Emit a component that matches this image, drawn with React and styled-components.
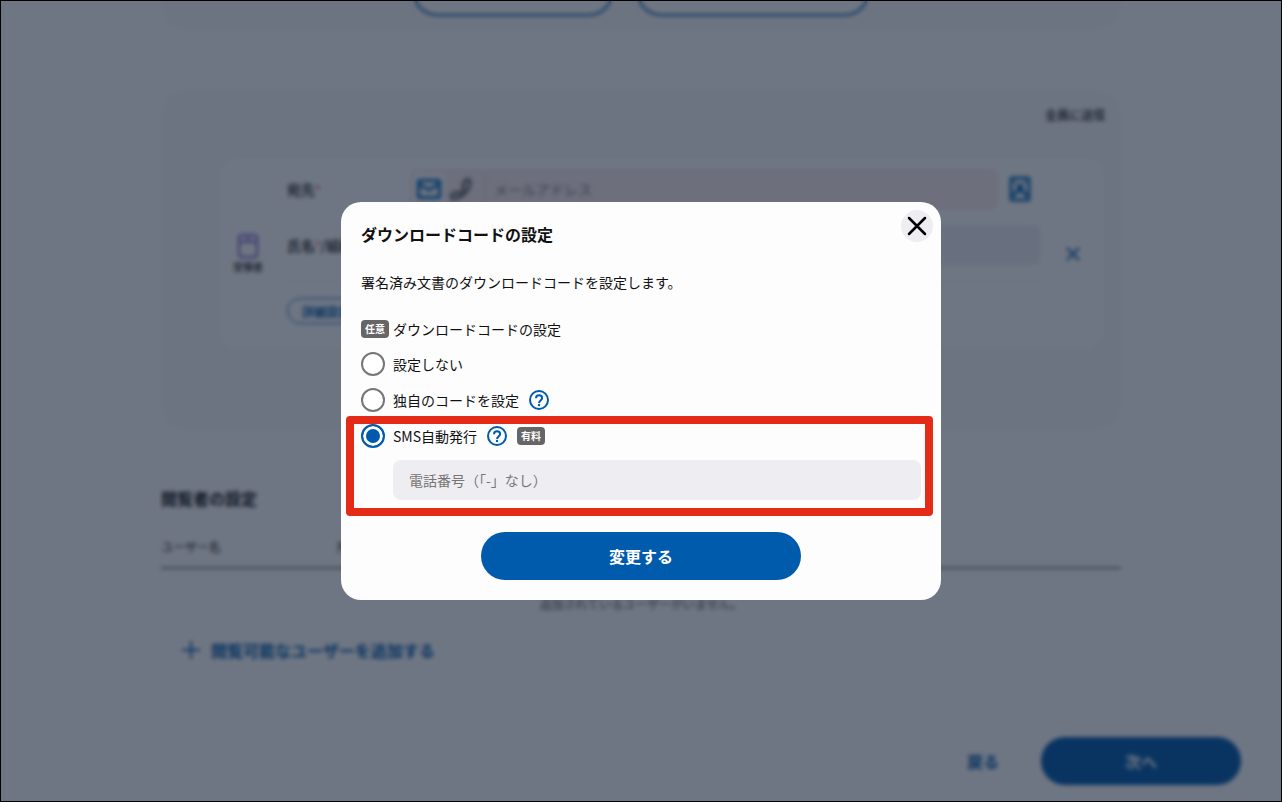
import React, { useState } from "react";
import styled, { createGlobalStyle, css } from "styled-components";

const GlobalStyle = createGlobalStyle`
  *, *::before, *::after {
    box-sizing: border-box;
  }
  body {
    margin: 0;
    background-color: #fff;
    color: #111;
    font-family: "Noto Sans CJK JP", sans-serif;
    font-size: 14px;
    line-height: 20px;
  }
  button, input {
    font-family: inherit;
  }
  button {
    cursor: pointer;
  }
`;

const blue = "#005bac";

const Page = styled.div`
  height: 100vh;
  overflow: hidden;
  display: flex;
  flex-direction: column;
`;

const Content = styled.main`
  flex: 1;
  min-height: 0;
  width: 100%;
  max-width: 960px;
  margin: 0 auto;
`;

const AddPanel = styled.section`
  display: flex;
  justify-content: center;
  align-items: flex-end;
  gap: 24px;
  height: 30px;
  padding-bottom: 14px;
  background-color: #f9f9fb;
  border-radius: 0 0 24px 24px;
`;

const OutlineButton = styled.button`
  flex: none;
  width: ${({ $wide }) => ($wide ? "232px" : "200px")};
  height: 48px;
  border: 2px solid ${blue};
  border-radius: 24px;
  background-color: #fff;
`;

const Panel = styled.section`
  margin-top: 60px;
  padding: 16px 16px 80px 58px;
  background-color: #f9f9fb;
  border-radius: 24px;
`;

const SendOrder = styled.p`
  margin: 0 0 33px;
  font-size: 12px;
  line-height: 18px;
  font-weight: 500;
  text-align: right;
`;

const Card = styled.div`
  display: flex;
  align-items: center;
  padding: 0 24px 0 14px;
  background-color: #fff;
  border-radius: 20px;
  box-shadow: 0 0 8px rgba(0, 0, 60, 0.04);
`;

const Role = styled.div`
  width: 30px;
  display: flex;
  flex-direction: column;
  align-items: center;
  font-size: 10px;
  line-height: 16px;
  font-weight: 500;
  white-space: nowrap;
`;

const Fields = styled.div`
  flex: 1;
  margin-left: 24px;
  padding: 12px 0 26px;
`;

const FieldRow = styled.div`
  display: flex;
  align-items: center;
  height: 40px;
  margin-bottom: 16px;
`;

const FieldLabel = styled.label`
  width: 123px;
  font-weight: 500;
  white-space: nowrap;
  overflow: hidden;
`;

const Required = styled.span`
  color: #d9304a;
  font-size: 12px;
  font-weight: 400;
`;

const AddressBox = styled.div`
  flex: 1;
  height: 40px;
  display: flex;
  align-items: center;
  padding-left: 2px;
  background-color: #fbedef;
  border: 1px solid #f8e0e4;
  border-radius: 8px;
`;

const KindButton = styled.button`
  width: 32px;
  height: 32px;
  padding: 0;
  display: flex;
  align-items: center;
  justify-content: center;
  border: 0;
  border-radius: 4px;
  background-color: ${({ $active }) => ($active ? "#fff" : "transparent")};
`;

const BareInput = styled.input`
  flex: 1;
  min-width: 0;
  height: 32px;
  margin-left: 8px;
  padding: 0 8px;
  border: 0;
  border-left: 1px solid #e3d3d8;
  background: transparent;
  font-size: 14px;
  &::placeholder {
    color: #777;
  }
`;

const NameInput = styled.input`
  flex: 1;
  min-width: 0;
  height: 40px;
  border: 0;
  border-radius: 8px;
  background-color: #eeeef3;
`;

const IconButton = styled.button`
  display: flex;
  padding: 0;
  border: 0;
  background: transparent;
`;

const BookButton = styled(IconButton)`
  width: 43px;
  justify-content: center;
`;

const RemoveButton = styled(IconButton)`
  margin: 0 1px 0 25px;
`;

const Divider = styled.hr`
  height: 1px;
  margin: 0 0 16px;
  border: 0;
  background-color: #eeeef3;
`;

const DetailButton = styled.button`
  display: block;
  height: 26px;
  padding: 0 14px;
  border: 1px solid ${blue};
  border-radius: 13px;
  background-color: #fff;
  color: ${blue};
  font-size: 12px;
  font-weight: 700;
`;

const SectionTitle = styled.h2`
  margin: 56px 0 0;
  font-size: 16px;
  line-height: 24px;
  font-weight: 700;
`;

const ViewerTable = styled.table`
  width: 100%;
  margin-top: 22px;
  border-collapse: collapse;
  font-size: 12px;
  th {
    padding: 5px 0 10px;
    border-bottom: 2px solid #888;
    font-weight: 400;
    text-align: left;
  }
  th:first-child {
    width: 176px;
  }
  td {
    padding: 25px 0 0;
    text-align: center;
    color: #555;
  }
`;

const AddViewer = styled.button`
  display: flex;
  align-items: center;
  gap: 10px;
  margin: 24px 0 0 20px;
  padding: 0;
  border: 0;
  background: transparent;
  color: ${blue};
  font-size: 16px;
  line-height: 24px;
  font-weight: 700;
`;

const Footer = styled.footer`
  display: flex;
  justify-content: flex-end;
  align-items: center;
  gap: 42px;
  padding: 19px 41px 17px;
  border-top: 1px solid #f3f3f6;
`;

const BackButton = styled.button`
  padding: 0;
  border: 0;
  background: transparent;
  color: ${blue};
  font-size: 16px;
  font-weight: 700;
`;

const PrimaryButton = styled.button`
  display: block;
  width: ${({ $width }) => $width};
  max-width: 100%;
  height: 48px;
  border: 0;
  border-radius: 24px;
  background-color: ${blue};
  color: #fff;
  font-size: 16px;
  font-weight: 700;
`;

const Overlay = styled.div`
  position: fixed;
  inset: 0;
  display: flex;
  align-items: center;
  justify-content: center;
  border: 1px solid #000;
  background-color: rgba(15, 27, 48, 0.6);
  backdrop-filter: blur(2px);
`;

const Dialog = styled.form`
  position: relative;
  width: 100%;
  max-width: 600px;
  padding: 20px;
  background-color: #fdfdfe;
  border-radius: 20px;
`;

const DialogTitle = styled.h1`
  margin: 0;
  font-size: 16px;
  line-height: 24px;
  font-weight: 700;
`;

const CloseButton = styled.button`
  position: absolute;
  top: 8px;
  right: 8px;
  width: 32px;
  height: 32px;
  padding: 0;
  display: flex;
  align-items: center;
  justify-content: center;
  border: 0;
  border-radius: 50%;
  background-color: #eeedf2;
`;

const Description = styled.p`
  margin: 24px 0;
  line-height: 24px;
`;

const Options = styled.fieldset`
  min-width: 0;
  margin: 0;
  padding: 0;
  border: 0;
`;

const Legend = styled.legend`
  display: flex;
  align-items: center;
  gap: 4px;
  padding: 0;
  height: 22px;
`;

const Badge = styled.span`
  width: 28px;
  height: 18px;
  border-radius: 4px;
  background-color: #666;
  color: #fff;
  font-size: 10px;
  line-height: 18px;
  font-weight: 700;
  text-align: center;
`;

const Option = styled.div`
  display: flex;
  align-items: center;
  height: 24px;
  margin-top: 12px;
`;

const OptionLabel = styled.label`
  display: flex;
  align-items: center;
  gap: 8px;
`;

const Radio = styled.input`
  appearance: none;
  width: 24px;
  height: 24px;
  margin: 0;
  border: 2px solid #767676;
  border-radius: 50%;
  background-color: #fff;
  ${({ checked }) =>
    checked &&
    css`
      border-color: ${blue};
      background-color: ${blue};
      box-shadow: inset 0 0 0 3px #fff;
    `};
`;

const HelpButton = styled(IconButton)`
  margin: 0 10px;
`;

const Highlight = styled.div`
  margin: 4px -12px 0 -15px;
  padding: 0 4px 8px 7px;
  border: 8px solid #e42b18;
  border-radius: 4px;
  ${Option} {
    margin-top: 0;
  }
`;

const PhoneInput = styled.input`
  display: block;
  width: calc(100% - 32px);
  height: 40px;
  margin: 12px 0 0 32px;
  padding: 0 16px;
  border: 0;
  border-radius: 8px;
  background-color: #eeedf2;
  font-size: 14px;
  &::placeholder {
    color: #757575;
  }
`;

const Submit = styled(PrimaryButton)`
  margin: 16px auto 0;
`;

const HelpIcon = () => (
  <svg width="20" height="20" viewBox="0 0 20 20" fill="none" stroke={blue} strokeWidth="2">
    <circle cx="10" cy="10" r="9" />
    <path d="M7 8.200C7 6.300 8.300 5.200 10 5.200c1.800 0 3.100 1.100 3.100 2.700 0 1.200-.6 1.800-1.500 2.500-1.100.9-1.500 1.400-1.500 2.500" />
    <circle cx="10" cy="15" r="1.200" fill={blue} stroke="none" />
  </svg>
);

const CrossIcon = ({ size, color, width }) => (
  <svg width={size} height={size} viewBox="0 0 20 20" fill="none" stroke={color} strokeWidth={width} strokeLinecap="round">
    <path d="M2 2l16 16M18 2L2 18" />
  </svg>
);

const MailIcon = () => (
  <svg width="24" height="24" viewBox="0 0 24 24" fill="none" stroke="#0068b7" strokeWidth="3">
    <rect x="1.500" y="3.500" width="21" height="17" rx="1" />
    <path d="M2 7l10 6 10-6" />
  </svg>
);

const PhoneIcon = () => (
  <svg width="24" height="24" viewBox="0 0 24 24" fill="none" stroke="#666" strokeWidth="3" strokeLinejoin="round">
    <path d="M17 2.500l4 .8c.3 5-1.500 9.700-5 13.200s-8.200 5.300-13 5l-.8-4 5-2.500 3 1.800c2.200-1.300 3.800-2.900 5-5l-1.600-3.300z" />
  </svg>
);

const BookIcon = () => (
  <svg width="22" height="26" viewBox="0 0 22 26" fill="none" stroke="#0067b4" strokeWidth="3">
    <rect x="2" y="2" width="18" height="22" rx="1" />
    <circle cx="11" cy="11" r="2" />
    <path d="M5 21c0-4 2.500-6 6-6s6 2 6 6M5 6h2M15 6h2" />
  </svg>
);

const RoleIcon = () => (
  <svg width="22" height="26" viewBox="0 0 22 26" fill="none" stroke="#7a5cc8" strokeWidth="2">
    <rect x="2" y="2" width="18" height="22" rx="3" />
    <path d="M2 9h18M8 5.500h6" />
  </svg>
);

const PlusIcon = () => (
  <svg width="20" height="20" viewBox="0 0 20 20" stroke={blue} strokeWidth="2">
    <path d="M10 1v18M1 10h18" />
  </svg>
);

const RecipientPanel = () => (
  <Panel>
    <SendOrder>全員に送信</SendOrder>
    <Card>
      <Role>
        <RoleIcon />
        受領者
      </Role>
      <Fields>
        <FieldRow>
          <FieldLabel htmlFor="address">
            宛先<Required>*</Required>
          </FieldLabel>
          <AddressBox>
            <KindButton type="button" aria-label="メール" $active>
              <MailIcon />
            </KindButton>
            <KindButton type="button" aria-label="電話">
              <PhoneIcon />
            </KindButton>
            <BareInput id="address" placeholder="メールアドレス" />
          </AddressBox>
          <BookButton type="button" aria-label="アドレス帳">
            <BookIcon />
          </BookButton>
        </FieldRow>
        <FieldRow>
          <FieldLabel htmlFor="name">
            氏名<Required>*</Required>/組織名
          </FieldLabel>
          <NameInput id="name" />
        </FieldRow>
        <Divider />
        <DetailButton type="button">詳細設定</DetailButton>
      </Fields>
      <RemoveButton type="button" aria-label="削除">
        <CrossIcon size={14} color={blue} width={3} />
      </RemoveButton>
    </Card>
  </Panel>
);

const ViewerSection = () => (
  <section>
    <SectionTitle>閲覧者の設定</SectionTitle>
    <ViewerTable>
      <thead>
        <tr>
          <th>ユーザー名</th>
          <th>所属</th>
        </tr>
      </thead>
      <tbody>
        <tr>
          <td colSpan={2}>追加されているユーザーがいません。</td>
        </tr>
      </tbody>
    </ViewerTable>
    <AddViewer type="button">
      <PlusIcon />
      閲覧可能なユーザーを追加する
    </AddViewer>
  </section>
);

const DownloadCodeDialog = () => {
  const [mode, setMode] = useState("sms");
  const radio = value => ({
    type: "radio",
    name: "mode",
    value,
    checked: mode === value,
    onChange: () => setMode(value)
  });

  return (
    <Dialog role="dialog" aria-labelledby="dialog-title" onSubmit={e => e.preventDefault()}>
      <DialogTitle id="dialog-title">ダウンロードコードの設定</DialogTitle>
      <CloseButton type="button" aria-label="閉じる">
        <CrossIcon size={20} color="#000" width={2.5} />
      </CloseButton>
      <Description>署名済み文書のダウンロードコードを設定します。</Description>
      <Options>
        <Legend>
          <Badge>任意</Badge>
          ダウンロードコードの設定
        </Legend>
        <Option>
          <OptionLabel>
            <Radio {...radio("none")} />
            設定しない
          </OptionLabel>
        </Option>
        <Option>
          <OptionLabel>
            <Radio {...radio("own")} />
            独自のコードを設定
          </OptionLabel>
          <HelpButton type="button" aria-label="独自のコードについて">
            <HelpIcon />
          </HelpButton>
        </Option>
        <Highlight>
          <Option>
            <OptionLabel>
              <Radio {...radio("sms")} />
              SMS自動発行
            </OptionLabel>
            <HelpButton type="button" aria-label="SMS自動発行について">
              <HelpIcon />
            </HelpButton>
            <Badge>有料</Badge>
          </Option>
          <PhoneInput type="tel" aria-label="電話番号" placeholder="電話番号（「-」なし）" />
        </Highlight>
      </Options>
      <Submit type="submit" $width="320px">
        変更する
      </Submit>
    </Dialog>
  );
};

const App = () => (
  <>
    <GlobalStyle />
    <Page>
      <Content>
        <AddPanel>
          <OutlineButton type="button" aria-label="宛先を追加" />
          <OutlineButton type="button" aria-label="アドレス帳から追加" $wide />
        </AddPanel>
        <RecipientPanel />
        <ViewerSection />
      </Content>
      <Footer>
        <BackButton type="button">戻る</BackButton>
        <PrimaryButton type="button" $width="200px">
          次へ
        </PrimaryButton>
      </Footer>
    </Page>
    <Overlay>
      <DownloadCodeDialog />
    </Overlay>
  </>
);

export default App;
